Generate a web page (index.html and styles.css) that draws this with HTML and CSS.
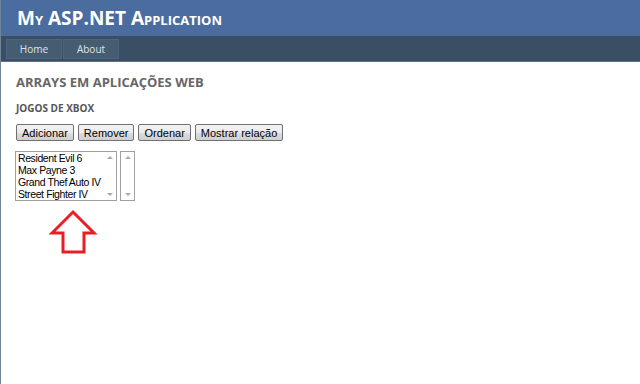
FILE: index.html
```html
<!DOCTYPE html>
<html lang="pt">

<head>
  <meta charset="UTF-8">
  <title>Arrays em aplicações web</title>
  <link rel="stylesheet" href="styles.css">
</head>

<body>
  <div class="page">
    <header class="header">
      <h1 class="title">My ASP.NET Application</h1>
    </header>

    <nav class="menu">
      <a class="menu-item" href="#">Home</a>
      <a class="menu-item" href="#">About</a>
    </nav>

    <div class="main">
      <h2>Arrays em aplicações web</h2>
      <h3>Jogos de Xbox</h3>

      <div class="actions">
        <button class="btn">Adicionar</button>
        <button class="btn">Remover</button>
        <button class="btn">Ordenar</button>
        <button class="btn">Mostrar relação</button>
      </div>

      <div class="lists">
        <div class="listbox games">
          <ul class="items">
            <li>Resident Evil 6</li>
            <li>Max Payne 3</li>
            <li>Grand Thef Auto IV</li>
            <li>Street Fighter IV</li>
          </ul>
          <div class="scroll">
            <span class="arrow-up"></span>
            <span class="arrow-down"></span>
          </div>
        </div>
        <div class="listbox empty">
          <div class="scroll">
            <span class="arrow-up"></span>
            <span class="arrow-down"></span>
          </div>
        </div>
      </div>

      <svg class="pointer" width="50" height="46" viewBox="0 0 50 46">
        <path d="M24 3 L45 24 L35 24 L35 43 L14 43 L14 24 L3 24 Z" fill="#fff" stroke="#ec1c24" stroke-width="3" stroke-linejoin="miter" />
      </svg>
    </div>
  </div>
</body>

</html>
```

FILE: styles.css
```css
body {
  margin: 0;
  padding: 0;
  background-color: #6f8499;
  font-family: "Liberation Sans", Arial, sans-serif;
}

.page {
  margin-left: 1px;
  min-height: 384px;
  background-color: #ffffff;
}

.header {
  background-color: #4b6c9e;
  height: 36px;
  display: flex;
  align-items: center;
  padding-left: 16px;
}

.title {
  margin: 0;
  color: #ffffff;
  font-family: "Open Sans", sans-serif;
  font-size: 19px;
  font-weight: bold;
  font-variant: small-caps;
}

.menu {
  background-color: #3a4f63;
  border-bottom: 1px solid #5e7184;
  display: flex;
  align-items: flex-start;
  padding: 3px 0 0 5px;
  box-sizing: border-box;
  height: 26px;
}

.menu-item {
  display: block;
  width: 54px;
  height: 18px;
  line-height: 18px;
  text-align: center;
  background-color: #465c71;
  border: 1px solid #4d6580;
  margin-right: 1px;
  color: #dde4ec;
  text-decoration: none;
  font-family: "Open Sans", sans-serif;
  font-size: 10px;
}

.main {
  padding: 11px 15px 0 15px;
}

h2 {
  margin: 0;
  color: #666666;
  font-family: "Open Sans", sans-serif;
  font-size: 13px;
  font-weight: bold;
  text-transform: uppercase;
}

h3 {
  margin: 10px 0 0 0;
  color: #555555;
  font-family: "Open Sans", sans-serif;
  font-size: 10px;
  font-weight: bold;
  text-transform: uppercase;
}

.actions {
  display: flex;
  gap: 4px;
  margin-top: 9px;
}

.btn {
  height: 17px;
  padding: 0 5px;
  font-family: "Liberation Sans", Arial, sans-serif;
  font-size: 11px;
  color: #000000;
  border: 1px solid #707070;
  border-radius: 2px;
  background: linear-gradient(#f2f2f2, #ebebeb 50%, #dddddd 51%, #cfcfcf);
}

.lists {
  display: flex;
  gap: 3px;
  margin-top: 10px;
  margin-left: -1px;
}

.listbox {
  display: flex;
  height: 50px;
  box-sizing: border-box;
  border: 1px solid #a0a0a0;
  background-color: #ffffff;
}

.games {
  width: 102px;
}

.empty {
  width: 15px;
}

.items {
  list-style: none;
  margin: 0;
  padding: 0 0 0 2px;
  flex: 1;
  font-size: 10.5px;
  letter-spacing: -0.4px;
  line-height: 12px;
  color: #000000;
  white-space: nowrap;
}

.scroll {
  width: 13px;
  flex-shrink: 0;
  display: flex;
  flex-direction: column;
  justify-content: space-between;
  align-items: center;
  padding: 4px 0;
  margin-left: auto;
}

.arrow-up,
.arrow-down {
  width: 0;
  height: 0;
  border-left: 3px solid transparent;
  border-right: 3px solid transparent;
}

.arrow-up {
  border-bottom: 3px solid #a8a8a8;
}

.arrow-down {
  border-top: 3px solid #a8a8a8;
}

.pointer {
  display: block;
  margin: 8px 0 0 33px;
}
```
